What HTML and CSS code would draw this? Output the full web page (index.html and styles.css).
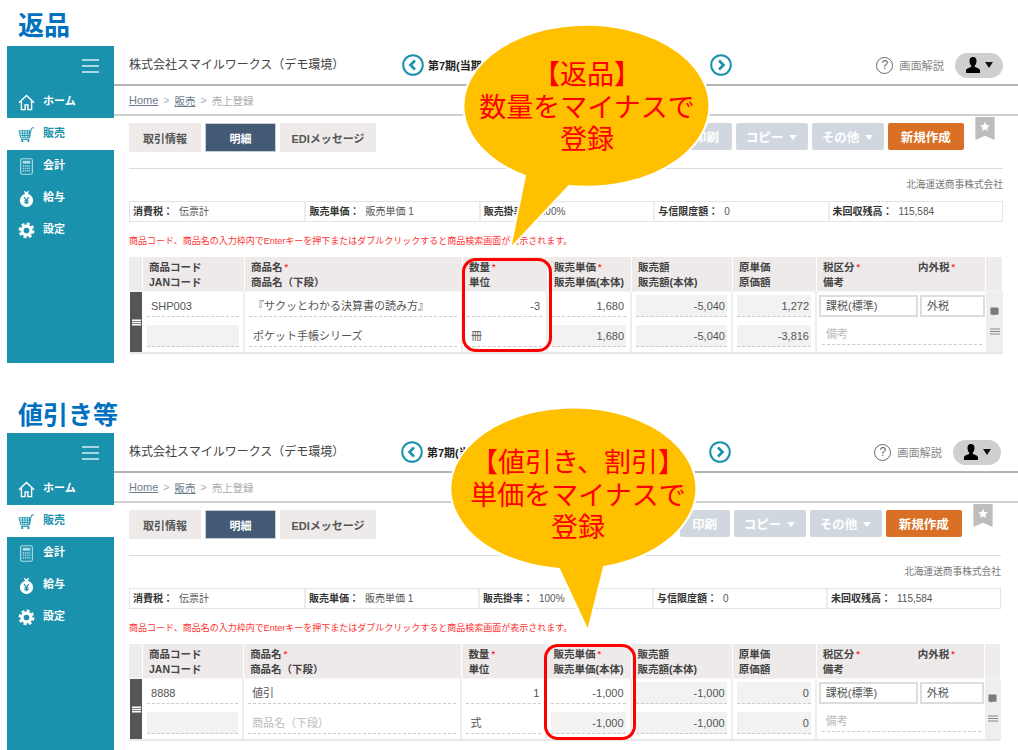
FILE: index.html
```html
<!DOCTYPE html>
<html lang="ja">
<head>
<meta charset="utf-8">
<title>返品・値引き等</title>
<link rel="stylesheet" href="styles.css">
</head>
<body>
<svg class="defs" width="0" height="0" aria-hidden="true">
  <symbol id="i-home" viewBox="0 0 18 18"><path d="M1 9.2 9 1.6l8 7.6M3.6 7.6v8.9h3.9v-5h3v5h3.9V7.6" fill="none" stroke="currentColor" stroke-width="1.5"/></symbol>
  <symbol id="i-cart" viewBox="0 0 18 18"><path d="M1 5h12.6l-1.3 7.6H3zM4.6 5l.6 7.6M7.3 5v7.6M10 5l-.2 7.6M12.3 5l-.7 7.6M1.8 7.5h11.4M2.4 10h10.4M13.6 5 14.6 2H17M3 14.2h9" fill="none" stroke="currentColor" stroke-width="1"/><circle cx="4.5" cy="16" r="1.2" fill="currentColor"/><circle cx="11" cy="16" r="1.2" fill="currentColor"/></symbol>
  <symbol id="i-calc" viewBox="0 0 18 18"><rect x="2.8" y=".8" width="12.4" height="16.4" rx="1.6" fill="none" stroke="currentColor" stroke-width="1.2"/><rect x="5" y="3" width="8" height="3" fill="currentColor"/><path d="M5 8.5h8M5 11h8M5 13.5h8" stroke="currentColor" stroke-width="1.4" stroke-dasharray="1.5 .8"/></symbol>
  <symbol id="i-bag" viewBox="0 0 18 18"><path d="M6 .8 9 2l3-1.200-1.500 3.400h-3z" fill="currentColor"/><circle cx="9" cy="11" r="7" fill="currentColor"/><path d="m6.500 7.500 2.500 3.500 2.500-3.500M9 11v4M6.800 11.500h4.400M6.800 13.300h4.400" fill="none" stroke="#1a91ad" stroke-width="1.200"/></symbol>
  <symbol id="i-gear" viewBox="0 0 18 18"><circle cx="9" cy="9" r="4.700" fill="none" stroke="currentColor" stroke-width="3.400"/><circle cx="9" cy="9" r="7.200" fill="none" stroke="currentColor" stroke-width="2.400" stroke-dasharray="3.200 2.455"/></symbol>
  <symbol id="i-left" viewBox="0 0 22 22"><circle cx="11" cy="11" r="9.800" fill="#fff" stroke="currentColor" stroke-width="2"/><path d="M13 6.500 8.500 11l4.500 4.500" fill="none" stroke="currentColor" stroke-width="2.600"/></symbol>
  <symbol id="i-right" viewBox="0 0 22 22"><circle cx="11" cy="11" r="9.800" fill="#fff" stroke="currentColor" stroke-width="2"/><path d="M9 6.500 13.500 11 9 15.500" fill="none" stroke="currentColor" stroke-width="2.600"/></symbol>
  <symbol id="i-person" viewBox="0 0 16 18"><path d="M8 1c2.600 0 3.700 1.900 3.500 4.400-.1 1.800-.9 3.300-1.700 4.200v1.400c2 .8 5.200 1.500 5.200 3.500V17H1v-2.500c0-2 3.200-2.700 5.200-3.500V9.600C5.400 8.700 4.600 7.200 4.500 5.400 4.300 2.900 5.400 1 8 1z" fill="currentColor"/></symbol>
  <symbol id="i-mark" viewBox="0 0 20 24"><path d="M0 0h20v24l-10-4.500L0 24z" fill="#bdbdbd"/><path d="m10 5 1.500 3.300 3.500.4-2.600 2.400.7 3.500L10 12.800l-3.100 1.800.7-3.500L5 8.700l3.500-.4z" fill="#fff"/></symbol>
  <symbol id="i-note" viewBox="0 0 10 10"><path d="M1.500 .5h7a1 1 0 0 1 1 1v6a1 1 0 0 1-1 1H5L3.500 9.800V8.500h-2a1 1 0 0 1-1-1v-6a1 1 0 0 1 1-1z" fill="currentColor"/></symbol>
  <symbol id="i-lines" viewBox="0 0 10 7"><path d="M0 1h10M0 3.500h10M0 6h10" stroke="currentColor"/></symbol>
</svg>

<section class="panel panel--a">
  <h1 class="title">返品</h1>
  <div class="app">
    <nav class="side">
      <div class="side-top"><span class="burger"><i></i><i></i><i></i></span></div>
      <a class="side-item"><svg class="side-icon"><use href="#i-home"/></svg><span class="side-label">ホーム</span></a>
      <a class="side-item is-current"><svg class="side-icon"><use href="#i-cart"/></svg><span class="side-label">販売</span></a>
      <a class="side-item"><svg class="side-icon side-icon--soft"><use href="#i-calc"/></svg><span class="side-label">会計</span></a>
      <a class="side-item"><svg class="side-icon"><use href="#i-bag"/></svg><span class="side-label">給与</span></a>
      <a class="side-item"><svg class="side-icon"><use href="#i-gear"/></svg><span class="side-label">設定</span></a>
    </nav>
    <main class="main">
      <header class="head">
        <div class="company">株式会社スマイルワークス（デモ環境）</div>
        <div class="period">
          <svg class="period-arrow"><use href="#i-left"/></svg>
          <span class="period-text">第7期(当期) 2020年04月01日～2021年03月31日</span>
          <svg class="period-arrow"><use href="#i-right"/></svg>
        </div>
        <div class="help"><span class="help-mark">?</span>画面解説</div>
        <div class="user"><svg class="user-icon"><use href="#i-person"/></svg><span class="user-caret"></span></div>
      </header>
      <div class="crumbs"><a>Home</a><span class="sep">&gt;</span><a>販売</a><span class="sep">&gt;</span><span class="here">売上登録</span></div>
      <div class="toolbar">
        <div class="tabs">
          <span class="tab">取引情報</span>
          <span class="tab is-active">明細</span>
          <span class="tab">EDIメッセージ</span>
        </div>
        <div class="actions">
          <span class="btn btn--print">印刷</span>
          <span class="btn btn--menu">コピー<i class="caret"></i></span>
          <span class="btn btn--menu">その他<i class="caret"></i></span>
          <span class="btn btn--new">新規作成</span>
        </div>
        <svg class="bookmark"><use href="#i-mark"/></svg>
      </div>
      <div class="client">北海運送商事株式会社</div>
      <div class="info">
        <div class="info-cell"><b>消費税：</b>伝票計</div>
        <div class="info-cell"><b>販売単価：</b>販売単価 1</div>
        <div class="info-cell"><b>販売掛率：</b>100%</div>
        <div class="info-cell"><b>与信限度額：</b>0</div>
        <div class="info-cell"><b>未回収残高：</b>115,584</div>
      </div>
      <p class="notice">商品コード、商品名の入力枠内でEnterキーを押下またはダブルクリックすると商品検索画面が表示されます。</p>
      <table class="lines">
        <colgroup><col class="c-grip"><col class="c-code"><col class="c-name"><col class="c-qty"><col class="c-price"><col class="c-amount"><col class="c-cost"><col class="c-tax"><col class="c-tail"></colgroup>
        <thead>
          <tr>
            <th></th>
            <th>商品コード<br>JANコード</th>
            <th>商品名<em>*</em><br>商品名（下段）</th>
            <th>数量<em>*</em><br>単位</th>
            <th>販売単価<em>*</em><br>販売単価(本体)</th>
            <th>販売額<br>販売額(本体)</th>
            <th>原単価<br>原価額</th>
            <th><span class="tax-head"><span>税区分<em>*</em></span><span>内外税<em>*</em></span></span>備考</th>
            <th></th>
          </tr>
        </thead>
        <tbody>
          <tr>
            <td class="grip" rowspan="2"><svg class="grip-icon"><use href="#i-lines"/></svg></td>
            <td><div class="field">SHP003</div></td>
            <td><div class="field">『サクッとわかる決算書の読み方』</div></td>
            <td><div class="field num">-3</div></td>
            <td><div class="field num">1,680</div></td>
            <td><div class="field num ro">-5,040</div></td>
            <td><div class="field num ro">1,272</div></td>
            <td class="tax"><div class="selects"><span class="select select--wide">課税(標準)</span><span class="select">外税</span></div></td>
            <td class="tail" rowspan="2"><svg class="tail-note"><use href="#i-note"/></svg><svg class="tail-lines"><use href="#i-lines"/></svg></td>
          </tr>
          <tr>
            <td><div class="field ro"></div></td>
            <td><div class="field">ポケット手帳シリーズ</div></td>
            <td><div class="field">冊</div></td>
            <td><div class="field num ro">1,680</div></td>
            <td><div class="field num ro">-5,040</div></td>
            <td><div class="field num ro">-3,816</div></td>
            <td class="tax"><div class="field hint memo">備考</div></td>
          </tr>
        </tbody>
      </table>
    </main>
  </div>
  <div class="ring"></div>
  <div class="callout">
    <svg class="callout-shape" viewBox="0 0 256 240"><path d="M109 166A123 81 0 1 0 65 156L50 229Z"/></svg>
    <div class="callout-text">【返品】<br>数量をマイナスで<br>登録</div>
  </div>
</section>

<section class="panel panel--b">
  <h1 class="title">値引き等</h1>
  <div class="app">
    <nav class="side">
      <div class="side-top"><span class="burger"><i></i><i></i><i></i></span></div>
      <a class="side-item"><svg class="side-icon"><use href="#i-home"/></svg><span class="side-label">ホーム</span></a>
      <a class="side-item is-current"><svg class="side-icon"><use href="#i-cart"/></svg><span class="side-label">販売</span></a>
      <a class="side-item"><svg class="side-icon side-icon--soft"><use href="#i-calc"/></svg><span class="side-label">会計</span></a>
      <a class="side-item"><svg class="side-icon"><use href="#i-bag"/></svg><span class="side-label">給与</span></a>
      <a class="side-item"><svg class="side-icon"><use href="#i-gear"/></svg><span class="side-label">設定</span></a>
    </nav>
    <main class="main">
      <header class="head">
        <div class="company">株式会社スマイルワークス（デモ環境）</div>
        <div class="period">
          <svg class="period-arrow"><use href="#i-left"/></svg>
          <span class="period-text">第7期(当期) 2020年04月01日～2021年03月31日</span>
          <svg class="period-arrow"><use href="#i-right"/></svg>
        </div>
        <div class="help"><span class="help-mark">?</span>画面解説</div>
        <div class="user"><svg class="user-icon"><use href="#i-person"/></svg><span class="user-caret"></span></div>
      </header>
      <div class="crumbs"><a>Home</a><span class="sep">&gt;</span><a>販売</a><span class="sep">&gt;</span><span class="here">売上登録</span></div>
      <div class="toolbar">
        <div class="tabs">
          <span class="tab">取引情報</span>
          <span class="tab is-active">明細</span>
          <span class="tab">EDIメッセージ</span>
        </div>
        <div class="actions">
          <span class="btn btn--print">印刷</span>
          <span class="btn btn--menu">コピー<i class="caret"></i></span>
          <span class="btn btn--menu">その他<i class="caret"></i></span>
          <span class="btn btn--new">新規作成</span>
        </div>
        <svg class="bookmark"><use href="#i-mark"/></svg>
      </div>
      <div class="client">北海運送商事株式会社</div>
      <div class="info">
        <div class="info-cell"><b>消費税：</b>伝票計</div>
        <div class="info-cell"><b>販売単価：</b>販売単価 1</div>
        <div class="info-cell"><b>販売掛率：</b>100%</div>
        <div class="info-cell"><b>与信限度額：</b>0</div>
        <div class="info-cell"><b>未回収残高：</b>115,584</div>
      </div>
      <p class="notice">商品コード、商品名の入力枠内でEnterキーを押下またはダブルクリックすると商品検索画面が表示されます。</p>
      <table class="lines">
        <colgroup><col class="c-grip"><col class="c-code"><col class="c-name"><col class="c-qty"><col class="c-price"><col class="c-amount"><col class="c-cost"><col class="c-tax"><col class="c-tail"></colgroup>
        <thead>
          <tr>
            <th></th>
            <th>商品コード<br>JANコード</th>
            <th>商品名<em>*</em><br>商品名（下段）</th>
            <th>数量<em>*</em><br>単位</th>
            <th>販売単価<em>*</em><br>販売単価(本体)</th>
            <th>販売額<br>販売額(本体)</th>
            <th>原単価<br>原価額</th>
            <th><span class="tax-head"><span>税区分<em>*</em></span><span>内外税<em>*</em></span></span>備考</th>
            <th></th>
          </tr>
        </thead>
        <tbody>
          <tr>
            <td class="grip" rowspan="2"><svg class="grip-icon"><use href="#i-lines"/></svg></td>
            <td><div class="field">8888</div></td>
            <td><div class="field">値引</div></td>
            <td><div class="field num">1</div></td>
            <td><div class="field num">-1,000</div></td>
            <td><div class="field num ro">-1,000</div></td>
            <td><div class="field num ro">0</div></td>
            <td class="tax"><div class="selects"><span class="select select--wide">課税(標準)</span><span class="select">外税</span></div></td>
            <td class="tail" rowspan="2"><svg class="tail-note"><use href="#i-note"/></svg><svg class="tail-lines"><use href="#i-lines"/></svg></td>
          </tr>
          <tr>
            <td><div class="field ro"></div></td>
            <td><div class="field hint">商品名（下段）</div></td>
            <td><div class="field">式</div></td>
            <td><div class="field num ro">-1,000</div></td>
            <td><div class="field num ro">-1,000</div></td>
            <td><div class="field num ro">0</div></td>
            <td class="tax"><div class="field hint memo">備考</div></td>
          </tr>
        </tbody>
      </table>
    </main>
  </div>
  <div class="ring"></div>
  <div class="callout">
    <svg class="callout-shape" viewBox="0 0 256 240"><path d="M158 164A123 81 0 1 0 113 166L142 228Z"/></svg>
    <div class="callout-text">【値引き、割引】<br>単価をマイナスで<br>登録</div>
  </div>
</section>
</body>
</html>
```
FILE: styles.css
```css
* { box-sizing: border-box; }
html, body { margin: 0; height: 750px; overflow: hidden; background: #fff; }
body { font-family: "Liberation Sans", "Noto Sans CJK JP", sans-serif; color: #555; }
.defs { position: absolute; }

.panel { position: relative; }
.panel--b { margin-top: 24px; }
.title {
  margin: 0; height: 46px; padding: 6px 0 0 18px;
  font-size: 26px; line-height: 40px; font-weight: 700; color: #0070c0;
}
.panel--b .title { padding-top: 8px; font-size: 25px; }
.app { display: flex; height: 317px; margin-left: 7px; overflow: hidden; }

/* sidebar */
.side { flex: 0 0 107px; background: #1a91ad; color: #fff; }
.side-top { height: 40px; display: flex; justify-content: flex-end; padding: 13px 15px 0 0; }
.burger { width: 17px; display: flex; flex-direction: column; gap: 4px; }
.burger i { display: block; height: 2px; background: #a9d6e2; }
.side-item { display: flex; align-items: center; height: 32px; padding-left: 11px; font-size: 11px; font-weight: 700; }
.side-label { margin-bottom: 4px; }
.side-icon { width: 17px; height: 17px; margin-right: 8px; color: #fff; }
.side-icon--soft { color: #b5dce6; }
.is-current { background: #fff; color: #1a91ad; }
.is-current .side-icon { color: #1a91ad; }

/* main column */
.main { flex: 1; min-width: 0; }
.head { display: flex; align-items: center; height: 40px; padding: 0 15px; border-bottom: 2px solid #b4b4b4; }
.panel--b .head { padding-right: 17px; }
.company { flex: 0 0 273px; font-size: 12px; color: #444; margin-top: -4px; }
.period { display: flex; align-items: center; color: #222; font-size: 11px; font-weight: 700; }
.panel--b .period { margin-left: -1px; }
.period-arrow { width: 22px; height: 22px; color: #1a91ad; }
.period-text { width: 276px; margin: 0 6px 0 4px; white-space: nowrap; overflow: hidden; }
.help { display: flex; align-items: center; margin-left: auto; font-size: 11.2px; color: #888; }
.help-mark {
  width: 17px; height: 17px; margin-right: 6px; border: 1.5px solid #666; border-radius: 50%;
  display: flex; align-items: center; justify-content: center; font-size: 12px; line-height: 1; color: #666;
}
.user { display: flex; align-items: center; justify-content: center; gap: 4px; width: 48px; height: 25px; margin-left: 11px; background: #cfcfcf; border-radius: 13px; }
.user-icon { width: 16px; height: 18px; color: #000; }
.user-caret { border: 4px solid transparent; border-top: 6px solid #111; border-bottom: 0; }

.crumbs { display: flex; align-items: center; gap: 5px; height: 30px; padding: 0 15px; border-bottom: 2px solid #cfcfcf; font-size: 10.5px; color: #aaa; }
.crumbs a { color: #6d7c8b; text-decoration: underline; }
.crumbs a:first-child { font-size: 11px; }
.here { color: #aaa; }

.toolbar { display: flex; align-items: flex-start; height: 53px; margin: 0 15px; border-bottom: 1px solid #ddd; }
.panel--b .toolbar { margin-right: 17px; }
.tabs { display: flex; gap: 4px; margin-top: 7px; }
.tab { display: flex; align-items: center; justify-content: center; width: 72px; height: 29px; background: #eeeaea; font-size: 11px; font-weight: 700; color: #555; }
.tab:last-child { width: 96px; }
.tab.is-active { width: 71px; background: #435a74; color: #fff; border: 1px solid #c5ced8; }
.actions { display: flex; gap: 4px; margin: 7px 0 0 auto; }
.btn { display: flex; align-items: center; justify-content: center; gap: 6px; height: 27px; background: #d0d7df; border-radius: 2px; color: #fff; font-size: 12.5px; font-weight: 700; }
.btn--print { width: 50px; }
.btn--menu { width: 72px; }
.btn--new { width: 76.5px; background: #d97025; }
.caret { border: 4px solid transparent; border-top: 5px solid #fff; border-bottom: 0; margin-top: 1px; }
.bookmark { width: 20px; height: 23px; margin: 1px 8px 0 11px; }

.client { height: 32px; padding: 0 15px; text-align: right; font-size: 9.7px; line-height: 31px; color: #777; }
.panel--b .client { padding-right: 17px; }
.info { display: grid; grid-template-columns: repeat(5, 1fr); height: 21px; margin: 0 15px; border: 1px solid #e4e4e4; }
.panel--b .info { margin-right: 17px; }
.info-cell { padding-left: 3px; border-left: 2px solid #ececec; font-size: 10px; line-height: 19px; color: #555; white-space: nowrap; }
.info-cell:first-child { border-left: 0; }
.info-cell b { margin-right: 6px; color: #333; }
.notice { height: 35px; margin: 0; padding: 0 15px; font-size: 9px; line-height: 39px; color: #f33; white-space: nowrap; }

/* lines table */
.lines { width: 874px; margin-left: 15px; table-layout: fixed; border-collapse: separate; border-spacing: 0; border-bottom: 2px solid #e8e8e8; }
.panel--b .lines { width: 872px; }
.c-grip { width: 14px; } .c-code { width: 102px; } .c-name { width: 218px; } .c-qty { width: 85px; }
.c-price { width: 84px; } .c-amount { width: 101px; } .c-cost { width: 84px; } .c-tax { width: 169px; } .c-tail { width: 17px; }
.panel--b .c-code { width: 101px; }
.panel--b .c-tax { width: 168px; }
.panel--b .c-tail { width: 16px; }
.lines th { height: 35px; padding: 2px 0 0 6px; background: #eeeaea; border-right: 1px solid #fff; border-bottom: 1px solid #f6f6f6; text-align: left; vertical-align: middle; font-size: 10.5px; line-height: 15px; font-weight: 700; color: #444; white-space: nowrap; }
.lines th:first-child, .lines th:last-child { padding: 0; background: #efecec; }
.lines em { margin-left: 2px; font-style: normal; font-size: 9px; color: #f33; vertical-align: top; }
.tax-head { display: flex; }
.tax-head > span:first-child { width: 95px; }
.lines td { height: 30px; padding: 3px 4px 5px; border-right: 2px solid #eee; vertical-align: top; }
.lines .grip { padding: 0; background: #555; border-left: 1px solid #fff; border-right: 1px solid #fff; vertical-align: middle; text-align: center; }
.grip-icon { display: block; width: 9px; height: 7px; margin: 0 auto; color: #fff; stroke-width: 1.7; }
.field { height: 22px; padding: 0 4px; border-bottom: 1px dashed #ccc; font-size: 11px; line-height: 22px; color: #555; white-space: nowrap; overflow: hidden; }
.num { padding-right: 2px; text-align: right; }
.ro { background: #f2f2f2; }
.hint { color: #bbb; }
.lines .tax { padding: 3px 1px 0 2px; border-right: 0; }
.selects { display: flex; gap: 2px; }
.select { flex: 1; height: 22px; padding-left: 5px; border: 2px solid #ddd; font-size: 11px; line-height: 18px; background: #fff; white-space: nowrap; }
.select--wide { flex: 0 0 99px; }
.memo { height: 20px; margin: 0 3px; line-height: 18px; }
.lines .tail { padding: 0; background: #eee; border-right: 0; text-align: center; vertical-align: top; }
.tail-note { display: block; width: 9px; height: 9px; margin: 15px auto 0; color: #7a7a7a; }
.tail-lines { display: block; width: 10px; height: 7px; margin: 12px auto 0; color: #888; stroke-width: 1.2; }

/* annotations over the screenshot */
.ring { position: absolute; border: 3px solid #f00; border-radius: 14px; }
.panel--a .ring { left: 462px; top: 258px; width: 90px; height: 94px; }
.panel--b .ring { left: 544px; top: 257px; width: 92px; height: 96px; }
.callout { position: absolute; width: 256px; height: 240px; }
.panel--a .callout { left: 460px; top: 20px; }
.panel--b .callout { left: 446px; top: 16px; }
.callout-shape { position: absolute; inset: 0; width: 256px; height: 240px; overflow: visible; }
.callout-shape path { fill: #ffc000; stroke: #fff; stroke-width: 2; }
.callout-text { position: relative; text-align: center; font-size: 27px; line-height: 32.5px; color: #f00; white-space: nowrap; }
.panel--a .callout-text { padding: 39px 2px 0 0; }
.panel--b .callout-text { padding: 44px 0 0 8px; }
```
